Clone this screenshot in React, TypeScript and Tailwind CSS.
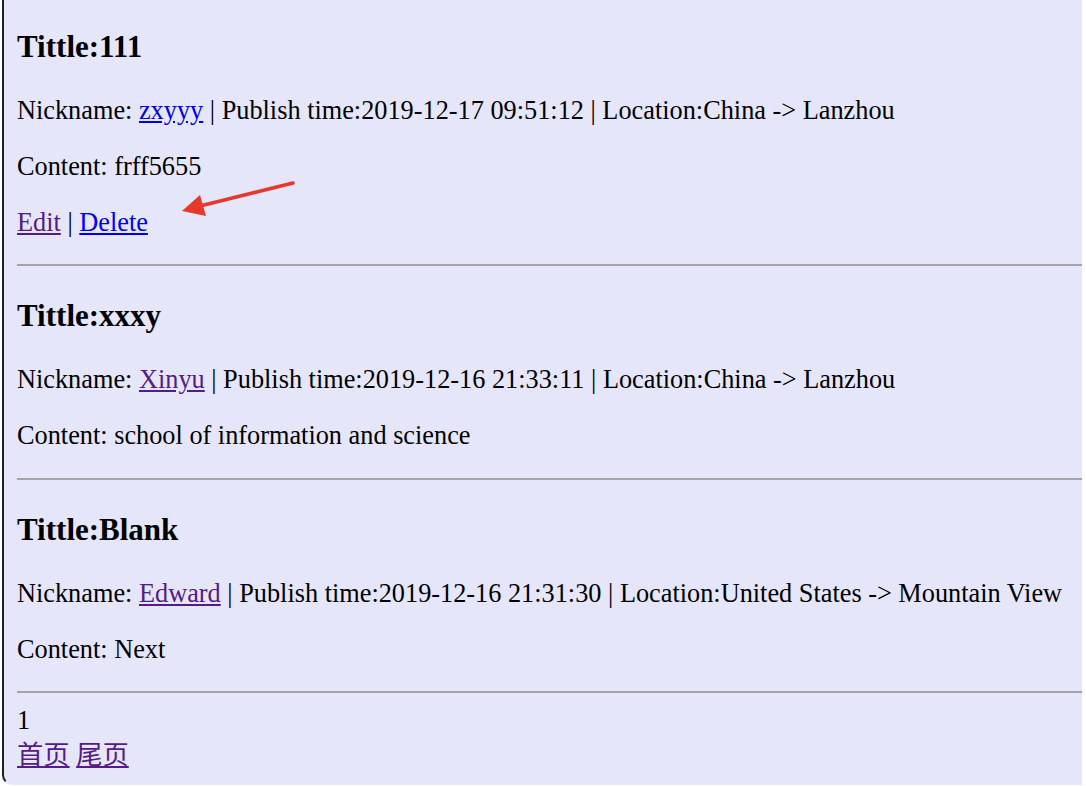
const posts = [
  {
    title: '111',
    nick: 'zxyyy',
    visited: false,
    time: '2019-12-17 09:51:12',
    location: 'China -> Lanzhou',
    content: 'frff5655',
    own: true,
  },
  {
    title: 'xxxy',
    nick: 'Xinyu',
    visited: true,
    time: '2019-12-16 21:33:11',
    location: 'China -> Lanzhou',
    content: 'school of information and science',
    own: false,
  },
  {
    title: 'Blank',
    nick: 'Edward',
    visited: true,
    time: '2019-12-16 21:31:30',
    location: 'United States -> Mountain View',
    content: 'Next',
    own: false,
  },
];

function Rule() {
  return <div className="h-0 border-t-2 border-[#a4a4a8]" />;
}

export default function App() {
  return (
    <div className="min-h-screen bg-white">
      <div className="relative ml-[2px] h-[785px] w-[1080px] overflow-hidden rounded-bl-[10px] border-b-2 border-l-2 border-[#1e1e1e] border-b-transparent bg-[#e6e6fa] pl-[13px] pt-[29px] font-['Liberation_Serif','Noto_Sans_CJK_SC',serif] text-[26.3px] text-black">
        {posts.map((p, i) => (
          <div key={p.title}>
            <h3 className={`${i === 0 ? '' : 'mt-[32px]'} mb-[32px] text-[31px] leading-[35px] font-bold`}>
              Tittle:{p.title}
            </h3>
            <p className="leading-[30px]">
              Nickname:{' '}
              <a
                href="#"
                className={p.visited ? 'text-[#551a8b] underline' : 'text-[#0000ee] underline'}
              >
                {p.nick}
              </a>{' '}
              | Publish time:{p.time} | Location:{p.location}
            </p>
            <p className="mt-[26px] leading-[30px]">Content: {p.content}</p>
            {p.own && (
              <p className="mt-[26px] leading-[30px]">
                <a href="#" className="text-[#551a8b] underline">
                  Edit
                </a>{' '}
                |{' '}
                <a href="#" className="text-[#0000ee] underline">
                  Delete
                </a>
              </p>
            )}
            <div className={i === 1 ? 'mt-[27px]' : 'mt-[26px]'}>
              <Rule />
            </div>
          </div>
        ))}

        <div className="mt-[13px] leading-[30px]">1</div>
        <div className="mt-[3px] leading-[34px]">
          <a href="#" className="text-[#551a8b] underline">
            首页
          </a>{' '}
          <a href="#" className="text-[#551a8b] underline">
            尾页
          </a>
        </div>

        {/* annotation arrow */}
        <svg
          className="absolute left-[172px] top-[176px]"
          width="124"
          height="46"
          viewBox="176 176 124 46"
        >
          <line x1="293" y1="183" x2="200" y2="206" stroke="#e8382c" strokeWidth="3.5" strokeLinecap="round" />
          <polygon points="182,211 200,195 206,216" fill="#e8382c" />
        </svg>
      </div>
    </div>
  );
}
